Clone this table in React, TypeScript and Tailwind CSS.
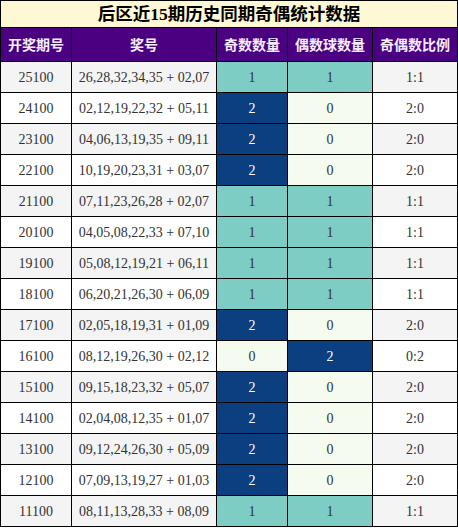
const rows: [string, string, number, number, string][] = [
  ['25100', '26,28,32,34,35 + 02,07', 1, 1, '1:1'],
  ['24100', '02,12,19,22,32 + 05,11', 2, 0, '2:0'],
  ['23100', '04,06,13,19,35 + 09,11', 2, 0, '2:0'],
  ['22100', '10,19,20,23,31 + 03,07', 2, 0, '2:0'],
  ['21100', '07,11,23,26,28 + 02,07', 1, 1, '1:1'],
  ['20100', '04,05,08,22,33 + 07,10', 1, 1, '1:1'],
  ['19100', '05,08,12,19,21 + 06,11', 1, 1, '1:1'],
  ['18100', '06,20,21,26,30 + 06,09', 1, 1, '1:1'],
  ['17100', '02,05,18,19,31 + 01,09', 2, 0, '2:0'],
  ['16100', '08,12,19,26,30 + 02,12', 0, 2, '0:2'],
  ['15100', '09,15,18,23,32 + 05,07', 2, 0, '2:0'],
  ['14100', '02,04,08,12,35 + 01,07', 2, 0, '2:0'],
  ['13100', '09,12,24,26,30 + 05,09', 2, 0, '2:0'],
  ['12100', '07,09,13,19,27 + 01,03', 2, 0, '2:0'],
  ['11100', '08,11,13,28,33 + 08,09', 1, 1, '1:1'],
];

const headers = ['开奖期号', '奖号', '奇数数量', '偶数球数量', '奇偶数比例'];

function countCell(n: number) {
  if (n === 2) return 'bg-[#0b3f7f] text-white';
  if (n === 1) return 'bg-[#7ecdc4] text-[#333]';
  return 'bg-[#f5fbef] text-[#333]';
}

export default function App() {
  return (
    <div className="w-[458px] bg-white font-['Liberation_Serif','Noto_Sans_CJK_SC',serif]">
      <div className="grid grid-cols-[70px_144px_70px_84px_84px] gap-px bg-black p-px">
        <div className="col-span-5 flex h-[26px] items-center justify-center bg-[#fff8d4] text-[17.5px] font-bold text-black">
          后区近15期历史同期奇偶统计数据
        </div>
        {headers.map((h) => (
          <div
            key={h}
            className="flex h-[33px] items-center justify-center bg-[#4b0082] font-['Noto_Sans_CJK_SC',sans-serif] text-[14px] font-bold text-[#f4eefa]"
          >
            {h}
          </div>
        ))}
        {rows.map(([issue, nums, odd, even, ratio], i) => {
          const base = i % 2 === 0 ? 'bg-[#f4f4f4]' : 'bg-white';
          return [
            <div key={issue + 'a'} className={`flex h-[30px] items-center justify-center text-[14px] text-[#333] ${base}`}>
              {issue}
            </div>,
            <div key={issue + 'b'} className={`flex h-[30px] items-center justify-center text-[14px] text-[#333] ${base}`}>
              {nums}
            </div>,
            <div key={issue + 'c'} className={`flex h-[30px] items-center justify-center text-[14px] ${countCell(odd)}`}>
              {odd}
            </div>,
            <div key={issue + 'd'} className={`flex h-[30px] items-center justify-center text-[14px] ${countCell(even)}`}>
              {even}
            </div>,
            <div key={issue + 'e'} className={`flex h-[30px] items-center justify-center text-[14px] text-[#333] ${base}`}>
              {ratio}
            </div>,
          ];
        })}
      </div>
    </div>
  );
}
